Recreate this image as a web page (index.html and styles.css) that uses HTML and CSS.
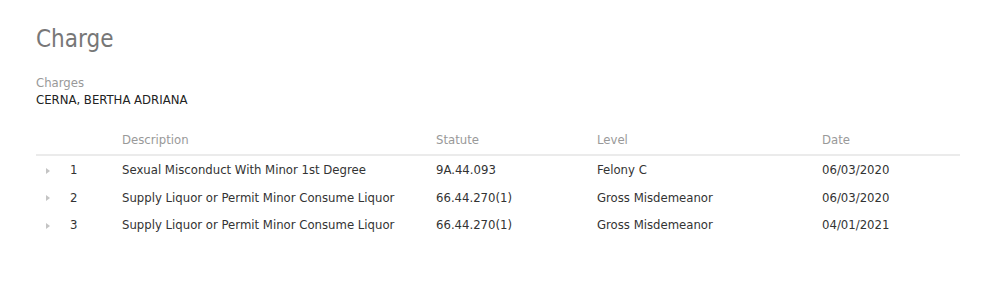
FILE: index.html
```html
<!DOCTYPE html>
<html>
<head>
<meta charset="utf-8">
<link rel="stylesheet" href="styles.css">
</head>
<body>
<div class="page">
  <h1 class="title">Charge</h1>
  <div class="field">
    <div class="label">Charges</div>
    <div class="value">CERNA, BERTHA ADRIANA</div>
  </div>
  <table class="grid">
    <colgroup>
      <col class="c-exp"><col class="c-num"><col class="c-desc"><col class="c-stat"><col class="c-level"><col class="c-date">
    </colgroup>
    <thead>
      <tr><th></th><th></th><th>Description</th><th>Statute</th><th>Level</th><th>Date</th></tr>
    </thead>
    <tbody>
      <tr><td><span class="caret"></span></td><td>1</td><td>Sexual Misconduct With Minor 1st Degree</td><td>9A.44.093</td><td>Felony C</td><td>06/03/2020</td></tr>
      <tr><td><span class="caret"></span></td><td>2</td><td>Supply Liquor or Permit Minor Consume Liquor</td><td>66.44.270(1)</td><td>Gross Misdemeanor</td><td>06/03/2020</td></tr>
      <tr><td><span class="caret"></span></td><td>3</td><td>Supply Liquor or Permit Minor Consume Liquor</td><td>66.44.270(1)</td><td>Gross Misdemeanor</td><td>04/01/2021</td></tr>
    </tbody>
  </table>
</div>
</body>
</html>
```
FILE: styles.css
```css
html, body { margin: 0; padding: 0; background: #fff; }
body { font-family: "DejaVu Sans Condensed", "DejaVu Sans", sans-serif; color: #333; }
.page { padding: 22px 30px 0 36px; }
.title { margin: 0; font-size: 24px; font-weight: normal; color: #777; line-height: 34px; }
.field { margin-top: 19px; }
.label { font-size: 13px; color: #999; line-height: 16px; }
.value { font-size: 13px; color: #222; line-height: 18px; }
.grid { margin-top: 16px; width: 924px; border-collapse: collapse; table-layout: fixed; font-size: 13px; }
.c-exp { width: 26px; } .c-num { width: 52px; } .c-desc { width: 314px; }
.c-stat { width: 161px; } .c-level { width: 225px; } .c-date { width: 146px; }
.grid th { text-align: left; font-weight: normal; color: #999; padding: 0 0 1px 8px; height: 28px; border-bottom: 2px solid #ebebeb; }
.grid td { padding: 0 0 0 8px; height: 27.5px; color: #333; }
.grid td:first-child { padding-left: 10px; }
.caret { display: inline-block; width: 0; height: 0; border-left: 4px solid #c4c4c4; border-top: 3.5px solid transparent; border-bottom: 3.5px solid transparent; vertical-align: middle; }
```
